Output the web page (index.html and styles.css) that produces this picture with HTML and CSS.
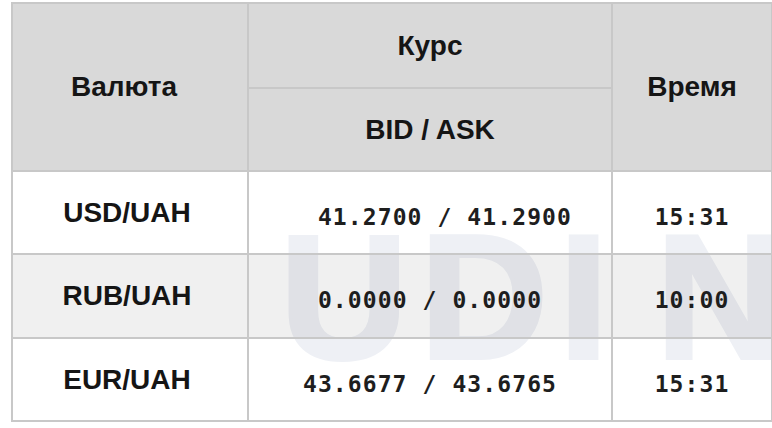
FILE: index.html
```html
<!DOCTYPE html>
<html lang="ru">
<head>
<meta charset="utf-8">
<title>Курс валют</title>
<link rel="stylesheet" href="styles.css">
</head>
<body>
<div class="wrap">
  <div class="watermark" aria-hidden="true"><span class="wm-u">U</span><span class="wm-d">D</span><span class="wm-i">I</span><span class="wm-n">N</span></div>
  <table class="rates">
    <colgroup>
      <col class="c1"><col class="c2"><col class="c3">
    </colgroup>
    <thead>
      <tr class="h1">
        <th rowspan="2" class="th-cur">Валюта</th>
        <th>Курс</th>
        <th rowspan="2">Время</th>
      </tr>
      <tr class="h2">
        <th>BID / ASK</th>
      </tr>
    </thead>
    <tbody>
      <tr class="r1">
        <td class="pair">USD/UAH</td>
        <td class="num">&nbsp;&nbsp;41.2700 / 41.2900</td>
        <td class="num">15:31</td>
      </tr>
      <tr class="r2 alt">
        <td class="pair">RUB/UAH</td>
        <td class="num">0.0000 / 0.0000</td>
        <td class="num">10:00</td>
      </tr>
      <tr class="r3">
        <td class="pair">EUR/UAH</td>
        <td class="num">43.6677 / 43.6765</td>
        <td class="num">15:31</td>
      </tr>
    </tbody>
  </table>
</div>
</body>
</html>
```

FILE: styles.css
```css
html, body {
  margin: 0;
  padding: 0;
  background: #ffffff;
}
body {
  padding: 2px 0 0 11px;
}
.wrap {
  position: relative;
  width: 760px;
}
.watermark {
  position: absolute;
  left: 269px;
  top: 207px;
  z-index: 0;
  display: flex;
  font-family: "Liberation Sans", Arial, sans-serif;
  font-weight: bold;
  font-size: 177px;
  line-height: 1;
  color: #eef0f5;
  -webkit-text-stroke: 4px #eef0f5;
  white-space: nowrap;
}
.wm-u { width: 140px; }
.wm-d { width: 139px; }
.wm-i { width: 97px; }
.rates {
  position: relative;
  z-index: 1;
  width: 760px;
  border-collapse: collapse;
  table-layout: fixed;
  font-family: "Liberation Sans", Arial, sans-serif;
  color: #151515;
}
.c1 { width: 236px; }
.c2 { width: 364px; }
.c3 { width: 160px; }
.rates th, .rates td {
  border: 2px solid #c8c8c8;
  padding: 0;
  text-align: center;
  vertical-align: middle;
}
.rates th {
  background: #d9d9d9;
  font-weight: bold;
  font-size: 28px;
}
.rates th.th-cur {
  padding-right: 12px;
}
.h1 { height: 85px; }
.h2 { height: 83px; }
.r1 { height: 83px; }
.r2 { height: 84px; }
.r3 { height: 83px; }
.alt td {
  background: rgba(0, 0, 0, 0.058);
}
.rates td.pair {
  font-weight: bold;
  font-size: 28px;
  padding-right: 6px;
}
.rates td.num {
  font-family: "DejaVu Sans Mono", "Liberation Mono", monospace;
  font-weight: bold;
  font-size: 23px;
  letter-spacing: 1.1px;
  color: #1e1e1e;
  padding-top: 8px;
}
```
